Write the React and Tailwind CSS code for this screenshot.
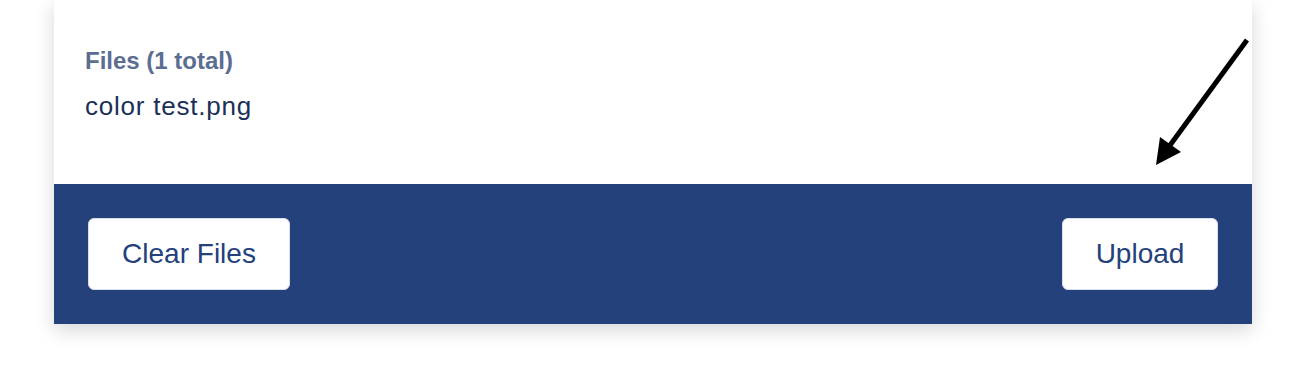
export default function App() {
  return (
    <div className="relative min-h-[376px] bg-white pl-[54px] font-['Liberation_Sans',Arial,sans-serif]">
      <div className="w-[1198px] bg-white shadow-[0_6px_18px_rgba(0,0,0,0.16)]">
        {/* File list */}
        <div className="h-[184px] pl-[31px] pt-[47px]">
          <p className="text-[24px] font-bold leading-[28px] text-[#5b6d91]">Files (1 total)</p>
          <p className="mt-[15px] text-[26px] leading-[32px] tracking-[0.03em] text-[#1b3057]">color test.png</p>
        </div>

        {/* Actions */}
        <div className="flex h-[140px] items-center justify-between bg-[#24417b] px-[34px]">
          <button className="flex h-[72px] w-[202px] items-center justify-center rounded-md border border-[#d9dde6] bg-white text-[28px] text-[#24417b]">
            Clear Files
          </button>
          <button className="flex h-[72px] w-[156px] items-center justify-center rounded-md border border-[#d9dde6] bg-white text-[28px] text-[#24417b]">
            Upload
          </button>
        </div>
      </div>

      {/* annotation arrow */}
      <svg className="absolute left-[1150px] top-[35px]" width="105" height="135" viewBox="1150 35 105 135">
        <line x1="1247" y1="40" x2="1168" y2="148" stroke="#000" strokeWidth="5" />
        <polygon points="1156,165 1160,137 1181,152" fill="#000" />
      </svg>
    </div>
  );
}
